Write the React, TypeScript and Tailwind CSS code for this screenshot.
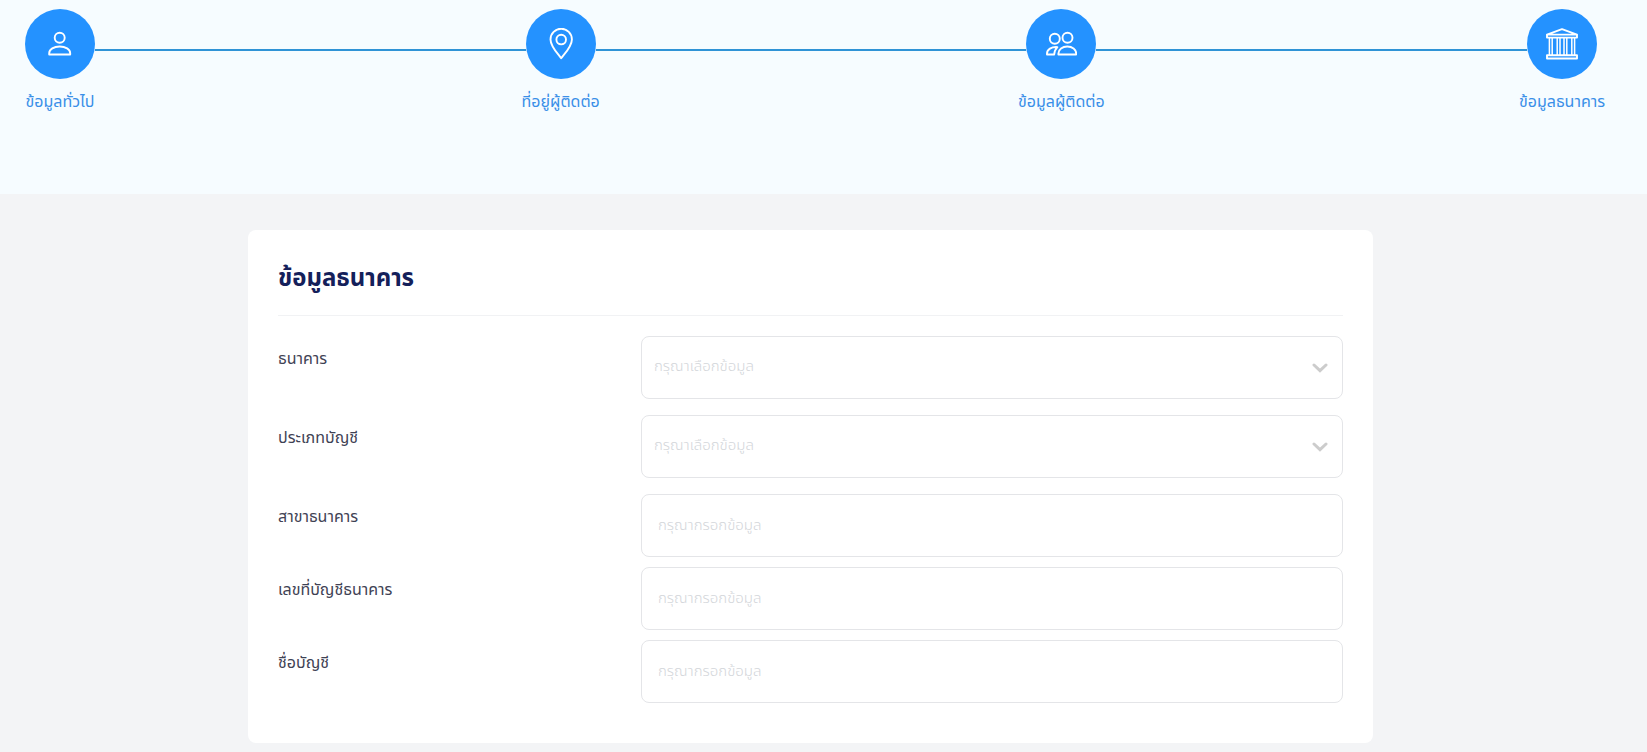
import type { ReactNode } from 'react';
import { Fragment } from 'react';

interface Step {
  label: string;
  icon: ReactNode;
}

interface Field {
  id: string;
  label: string;
  kind: 'select' | 'text';
}

const STEPS: Step[] = [
  {
    label: 'ข้อมูลทั่วไป',
    icon: (
      <>
        <circle cx="15.7" cy="9.8" r="5" />
        <path d="M5.2 26.5v-1.2c0-4 4.8-6.8 10.5-6.8s10.5 2.8 10.5 6.8v1.2z" />
      </>
    ),
  },
  {
    label: 'ที่อยู่ผู้ติดต่อ',
    icon: (
      <>
        <path d="M16.2 30.2C12.7 25.6 5.5 18.4 5.5 11.4a10.7 10.7 0 0 1 21.4 0c0 7-7.2 14.2-10.7 18.8z" />
        <circle cx="16.2" cy="11.6" r="4.8" />
      </>
    ),
  },
  {
    label: 'ข้อมูลผู้ติดต่อ',
    icon: (
      <>
        <circle cx="22.5" cy="9.8" r="5" />
        <circle cx="9.8" cy="10.8" r="5" />
        <path d="M13.4 26.5v-1c0-4 4-7 8.9-7s8.9 3 8.9 7v1z" />
        <path d="M12.4 19.1C6.4 18.6 2 21.6 2 25.6v.9h7.2c.1-3 1-5.2 3.2-7.4z" />
      </>
    ),
  },
  {
    label: 'ข้อมูลธนาคาร',
    icon: (
      <>
        <path d="M1 6.6 16 1.2l15 5.4v3H1zM1 6.6h30M1 27.3h30v3.2H1z" />
        <path d="M3.4 10v17M6.2 10v17M11.2 10v17M14 10v17M18 10v17M20.8 10v17M25.8 10v17M28.6 10v17" strokeWidth="1.5" />
      </>
    ),
  },
];

const FIELDS: Field[] = [
  { id: 'bank', label: 'ธนาคาร', kind: 'select' },
  { id: 'account-type', label: 'ประเภทบัญชี', kind: 'select' },
  { id: 'branch', label: 'สาขาธนาคาร', kind: 'text' },
  { id: 'account-number', label: 'เลขที่บัญชีธนาคาร', kind: 'text' },
  { id: 'account-name', label: 'ชื่อบัญชี', kind: 'text' },
];

function Stepper() {
  return (
    <ol className="flex items-start px-[25px]">
      {STEPS.map((step, i) => (
        <Fragment key={step.label}>
          {i > 0 && <li aria-hidden="true" className="mt-10 h-0.5 flex-1 bg-[#2f93d6]" />}
          <li className="flex w-[70px] shrink-0 flex-col items-center gap-[11px]">
            <span className="flex size-[70px] items-center justify-center rounded-full bg-[#2492ff]">
              <svg viewBox="0 0 32 32" className="size-8" fill="none" stroke="white" strokeWidth="1.9" strokeLinejoin="round">
                {step.icon}
              </svg>
            </span>
            <span className="whitespace-nowrap text-base leading-6 text-[#3a8fe8]">{step.label}</span>
          </li>
        </Fragment>
      ))}
    </ol>
  );
}

function SelectBox({ id }: { id: string }) {
  return (
    <div className="relative">
      <select
        id={id}
        defaultValue=""
        className="h-[63px] w-full appearance-none rounded-lg border border-[#e4e5e8] bg-white px-3 text-[15px] font-light text-[#d3d6da] outline-none"
      >
        <option value="" disabled>กรุณาเลือกข้อมูล</option>
      </select>
      <svg
        viewBox="0 0 16 10"
        className="pointer-events-none absolute right-[15px] top-[27px] h-2.5 w-4"
        fill="none"
        stroke="#cccccc"
        strokeWidth="3"
        strokeLinecap="round"
      >
        <path d="M2 2l6 5.6L14 2" />
      </svg>
    </div>
  );
}

function FieldRow({ field }: { field: Field }) {
  return (
    <div className={`grid grid-cols-[363fr_702fr] ${field.kind === 'select' ? 'mb-4' : 'mb-2.5'}`}>
      <label htmlFor={field.id} className="pt-[11px] text-base leading-6 text-[#3f4254]">
        {field.label}
      </label>
      {field.kind === 'select' ? (
        <SelectBox id={field.id} />
      ) : (
        <input
          id={field.id}
          type="text"
          placeholder="กรุณากรอกข้อมูล"
          className="h-[63px] w-full rounded-lg border border-[#e4e5e8] bg-white px-4 text-[15px] font-light text-[#3f4254] outline-none placeholder:text-[#d3d6da]"
        />
      )}
    </div>
  );
}

export default function App() {
  return (
    <div className="min-h-screen bg-[#f3f4f6] font-['Noto_Sans_Thai','Noto_Sans',sans-serif]">
      <header className="bg-[#f6fcff] pb-20 pr-[25px] pt-[9px]">
        <Stepper />
      </header>

      <main className="pb-2 pl-6 pr-[50px] pt-9">
        <form className="mx-auto max-w-[1125px] rounded-lg bg-white px-[30px] pb-[30px] pt-[33px]">
          <h1 className="border-b border-[#f1f2f4] pb-5 text-2xl font-bold leading-8 text-[#14205a]">
            ข้อมูลธนาคาร
          </h1>
          <div className="pt-5">
            {FIELDS.map((field) => (
              <FieldRow key={field.id} field={field} />
            ))}
          </div>
        </form>
      </main>
    </div>
  );
}
